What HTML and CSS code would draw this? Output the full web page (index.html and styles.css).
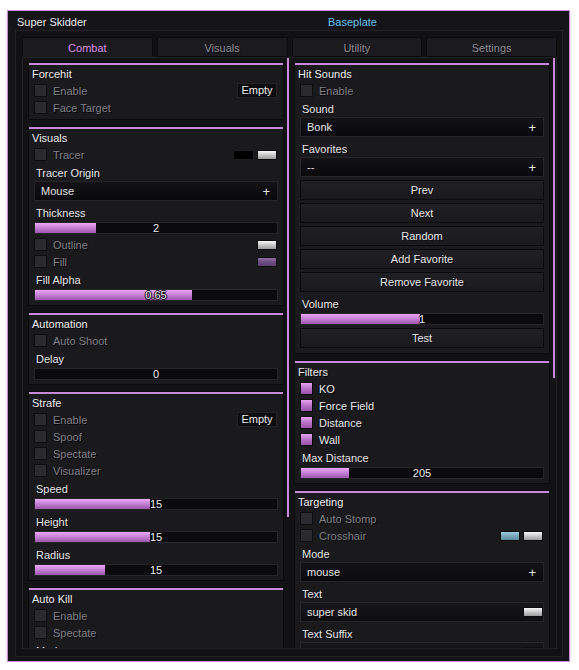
FILE: index.html
```html
<!DOCTYPE html>
<html>
<head>
<meta charset="utf-8">
<title>Super Skidder</title>
<link rel="stylesheet" href="styles.css">
</head>
<body>
<div class="window">
  <div class="titlebar"><span class="title">Super Skidder</span><span class="game">Baseplate</span></div>
  <div class="panel">
    <div class="tabs">
      <div class="tab active">Combat</div>
      <div class="tab">Visuals</div>
      <div class="tab">Utility</div>
      <div class="tab">Settings</div>
    </div>
    <div class="content">
      <div class="col left">
        <div class="stack">
          <div class="section">
            <div class="sec-title">Forcehit</div>
            <div class="row"><span class="cb"></span><span class="lbl">Enable</span><span class="key">Empty</span></div>
            <div class="row"><span class="cb"></span><span class="lbl">Face Target</span></div>
          </div>
          <div class="section">
            <div class="sec-title">Visuals</div>
            <div class="row"><span class="cb"></span><span class="lbl">Tracer</span><span class="sws"><span class="sw wide black"></span><span class="sw white"></span></span></div>
            <div class="flabel">Tracer Origin</div>
            <div class="dd"><span>Mouse</span><span class="plus">+</span></div>
            <div class="flabel">Thickness</div>
            <div class="slider"><div class="fill" style="width:25%"></div><div class="val">2</div></div>
            <div class="row"><span class="cb"></span><span class="lbl">Outline</span><span class="sws"><span class="sw white"></span></span></div>
            <div class="row"><span class="cb"></span><span class="lbl">Fill</span><span class="sws"><span class="sw purple"></span></span></div>
            <div class="flabel">Fill Alpha</div>
            <div class="slider"><div class="fill" style="width:65%"></div><div class="val">0.65</div></div>
          </div>
          <div class="section">
            <div class="sec-title">Automation</div>
            <div class="row"><span class="cb"></span><span class="lbl">Auto Shoot</span></div>
            <div class="flabel">Delay</div>
            <div class="slider"><div class="fill" style="width:0%"></div><div class="val">0</div></div>
          </div>
          <div class="section">
            <div class="sec-title">Strafe</div>
            <div class="row"><span class="cb"></span><span class="lbl">Enable</span><span class="key">Empty</span></div>
            <div class="row"><span class="cb"></span><span class="lbl">Spoof</span></div>
            <div class="row"><span class="cb"></span><span class="lbl">Spectate</span></div>
            <div class="row"><span class="cb"></span><span class="lbl">Visualizer</span></div>
            <div class="flabel">Speed</div>
            <div class="slider"><div class="fill" style="width:47.5%"></div><div class="val">15</div></div>
            <div class="flabel">Height</div>
            <div class="slider"><div class="fill" style="width:47.5%"></div><div class="val">15</div></div>
            <div class="flabel">Radius</div>
            <div class="slider"><div class="fill" style="width:29%"></div><div class="val">15</div></div>
          </div>
          <div class="section">
            <div class="sec-title">Auto Kill</div>
            <div class="row"><span class="cb"></span><span class="lbl">Enable</span></div>
            <div class="row"><span class="cb"></span><span class="lbl">Spectate</span></div>
            <div class="flabel">Mode</div>
          </div>
        </div>
        <div class="track"><div class="thumb tl"></div></div>
      </div>
      <div class="col right">
        <div class="stack">
          <div class="section">
            <div class="sec-title">Hit Sounds</div>
            <div class="row"><span class="cb"></span><span class="lbl">Enable</span></div>
            <div class="flabel">Sound</div>
            <div class="dd"><span>Bonk</span><span class="plus">+</span></div>
            <div class="flabel">Favorites</div>
            <div class="dd"><span>--</span><span class="plus">+</span></div>
            <div class="btn">Prev</div>
            <div class="btn">Next</div>
            <div class="btn">Random</div>
            <div class="btn">Add Favorite</div>
            <div class="btn">Remove Favorite</div>
            <div class="flabel">Volume</div>
            <div class="slider"><div class="fill" style="width:49%"></div><div class="val">1</div></div>
            <div class="btn">Test</div>
          </div>
          <div class="section">
            <div class="sec-title">Filters</div>
            <div class="row on"><span class="cb"></span><span class="lbl">KO</span></div>
            <div class="row on"><span class="cb"></span><span class="lbl">Force Field</span></div>
            <div class="row on"><span class="cb"></span><span class="lbl">Distance</span></div>
            <div class="row on"><span class="cb"></span><span class="lbl">Wall</span></div>
            <div class="flabel">Max Distance</div>
            <div class="slider"><div class="fill" style="width:20%"></div><div class="val">205</div></div>
          </div>
          <div class="section">
            <div class="sec-title">Targeting</div>
            <div class="row"><span class="cb"></span><span class="lbl">Auto Stomp</span></div>
            <div class="row"><span class="cb"></span><span class="lbl">Crosshair</span><span class="sws"><span class="sw blue"></span><span class="sw white"></span></span></div>
            <div class="flabel">Mode</div>
            <div class="dd"><span>mouse</span><span class="plus">+</span></div>
            <div class="flabel">Text</div>
            <div class="dd tb"><span>super skid</span><span class="sw white"></span></div>
            <div class="flabel">Text Suffix</div>
            <div class="dd tb"><span></span><span class="sw blue"></span></div>
          </div>
        </div>
        <div class="track"><div class="thumb tr"></div></div>
      </div>
    </div>
  </div>
</div>
</body>
</html>
```

FILE: styles.css
```css
* { box-sizing: border-box; }
body {
  margin: 0;
  background: #ffffff;
  font-family: "Liberation Sans", Arial, sans-serif;
  font-size: 11px;
  color: #e6e6e6;
}
.window {
  margin: 10px 0 0 7px;
  width: 563px;
  height: 652px;
  border: 1px solid #c78ad8;
  background: #151518;
  box-shadow: 0 2px 3px rgba(199, 138, 216, 0.45);
}
.titlebar {
  height: 19px;
  display: flex;
  align-items: center;
  padding: 2px 0 0 9px;
  text-shadow: 1px 1px 0 rgba(0,0,0,0.7);
}
.title { width: 311px; color: #ececec; }
.game { color: #6cc4f2; }
.panel {
  margin: 0 6px 0 7px;
  height: 627px;
  border: 1px solid #222226;
  background: #111114;
  padding: 6px 5px 0 6px;
}
.tabs { display: flex; gap: 4px; height: 20px; }
.tab {
  flex: 1;
  background: #1b1b1f;
  border: 1px solid #0c0c0f;
  border-bottom: 1px solid #0a0a0c;
  color: #8c8c91;
  text-align: center;
  line-height: 20px;
  text-shadow: 1px 1px 0 rgba(0,0,0,0.7);
}
.tab.active { color: #df94eb; border-bottom-color: #1b1b1f; }
.content {
  height: 592px;
  border: 1px solid #222226;
  background: #121215;
  display: flex;
  padding-left: 5px;
  overflow: hidden;
}
.col { display: flex; }
.stack {
  width: 256px;
  padding-top: 4px;
  display: flex;
  flex-direction: column;
  gap: 6px;
  overflow: hidden;
}
.track { width: 10px; padding-left: 3px; }
.right .track { width: 6px; }
.thumb { width: 2px; background: #c78ad8; }
.thumb.tl { height: 459px; }
.thumb.tr { height: 320px; }
.section {
  flex: none;
  background: #1a1a1d;
  border: 1px solid #0b0b0d;
  box-shadow: inset 0 2px 0 #c78ad8;
  padding: 4px 5px 3px;
  text-shadow: 1px 1px 0 rgba(0,0,0,0.75);
}
.sec-title { height: 15px; line-height: 15px; margin-left: -2px; color: #eeeeee; }
.row { display: flex; align-items: center; height: 17px; }
.slider + .row { margin-top: 2px; }
.cb {
  width: 13px;
  height: 13px;
  background: #2a2a2f;
  border: 1px solid #0e0e10;
  flex: none;
}
.row.on .cb {
  background: linear-gradient(#e3a3ef, #b56cc6 55%, #9a55aa);
  border-color: #0a0a0a;
}
.lbl { margin-left: 6px; color: #808085; }
.row.on .lbl { color: #e8e8e8; }
.key {
  margin-left: auto;
  margin-right: 1px;
  width: 40px;
  height: 15px;
  border: 1px solid #232327;
  background: #0e0e10;
  text-align: center;
  line-height: 13px;
  color: #eeeeee;
}
.sws { margin-left: auto; margin-right: 1px; display: flex; gap: 3px; }
.sw { width: 20px; height: 10px; border: 1px solid #0c0c0e; flex: none; }
.sw.wide { width: 21px; }
.sw.black { background: #000000; border-color: #1e1e20; }
.sw.white { background: linear-gradient(#f8f8f8, #c8c8c8 50%, #9c9c9c); }
.sw.purple { background: linear-gradient(#8e6ca2, #6e4e82 50%, #5a3e6a); }
.sw.blue { background: linear-gradient(#9ccad8, #7aa8b8 50%, #5e8a9a); }
.flabel { height: 15px; line-height: 15px; padding-left: 2px; margin-top: 5px; color: #e6e6e6; }
.row + .flabel { margin-top: 3px; }
.dd {
  height: 20px;
  border: 1px solid #26262a;
  background: linear-gradient(#131316, #0a0a0c);
  display: flex;
  align-items: center;
  justify-content: space-between;
  padding: 0 7px 0 6px;
  color: #e6e6e6;
}
.dd.tb { padding-right: 0; background: linear-gradient(#17171a, #0e0e10); }
.plus { font-size: 13px; }
.slider {
  height: 12px;
  margin-top: 1px;
  border: 1px solid #26262a;
  background: #0b0b0d;
  display: grid;
}
.slider:last-child { margin-bottom: 1px; }
.slider > * { grid-area: 1 / 1; }
.fill { height: 100%; background: linear-gradient(#eba8f5, #c47fd4 50%, #9a56aa); }
.val {
  text-align: center;
  line-height: 10px;
  color: #f2f2f2;
  text-shadow: -1px 0 #000, 1px 0 #000, 0 -1px #000, 0 1px #000;
}
.btn {
  height: 20px;
  margin-top: 3px;
  border: 1px solid #0b0b0d;
  background: linear-gradient(#202024, #1a1a1d);
  text-align: center;
  line-height: 18px;
  color: #e8e8e8;
}
.btn:last-child { margin-bottom: 2px; }
```
